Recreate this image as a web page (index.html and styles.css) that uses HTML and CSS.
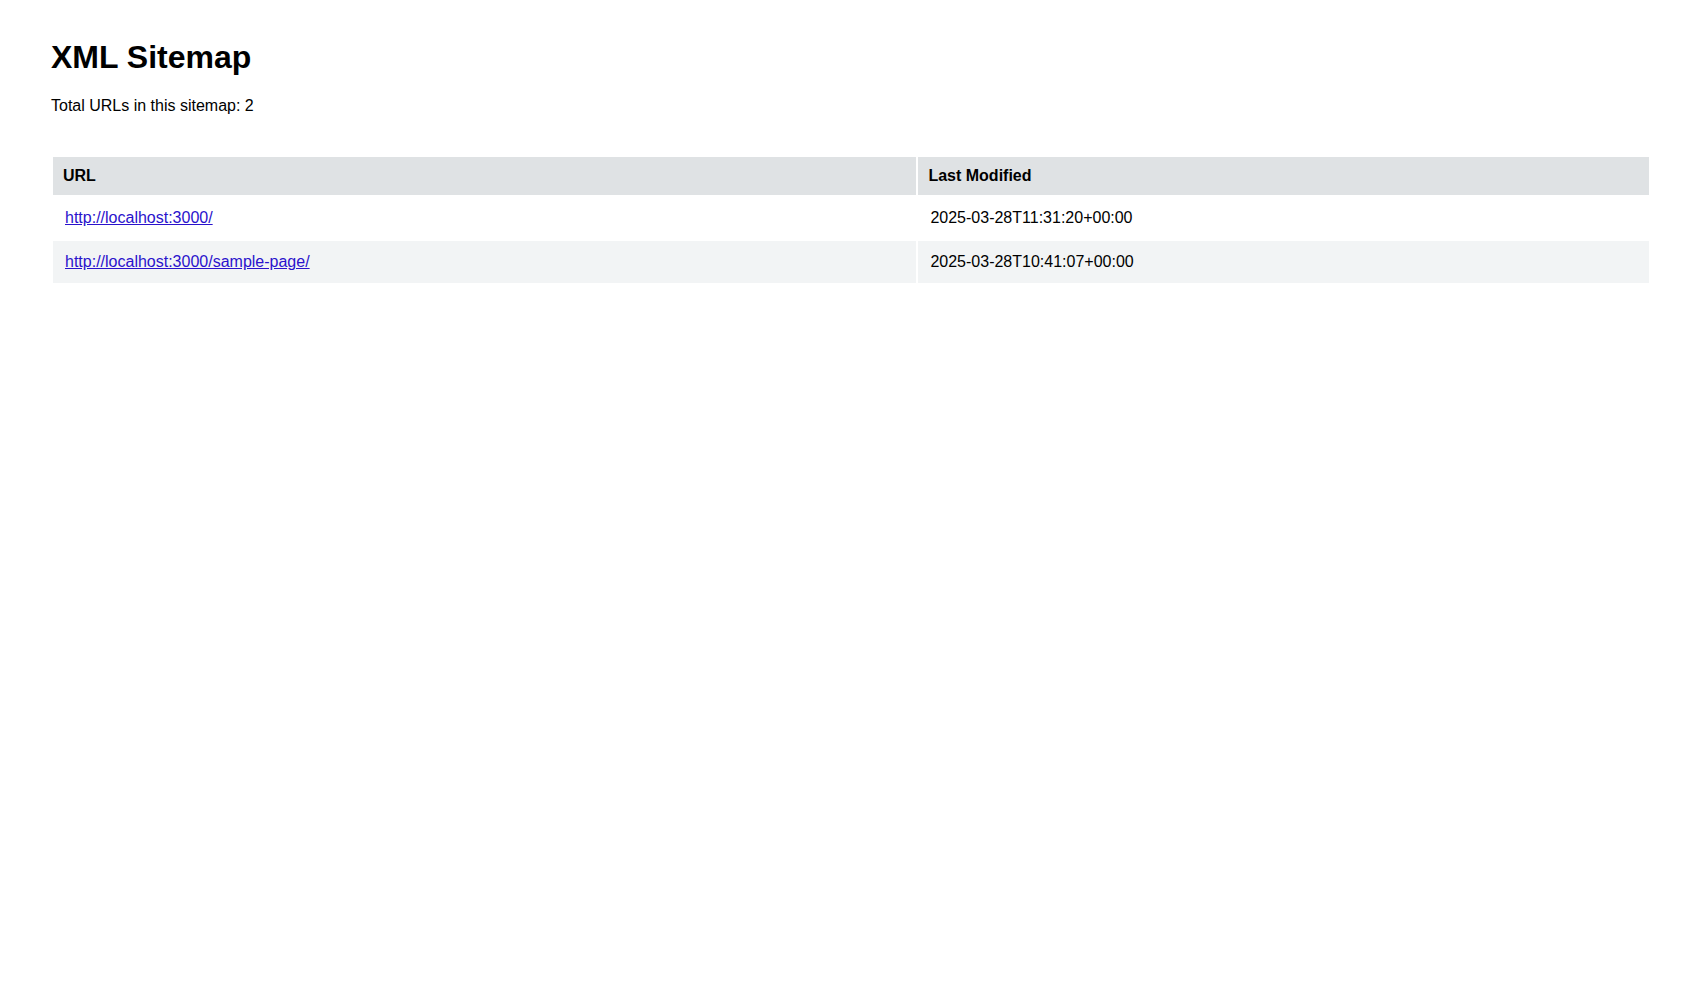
FILE: index.html
```html
<!DOCTYPE html>
<html lang="en">
<head>
  <meta charset="UTF-8">
  <title>XML Sitemap</title>
  <link rel="stylesheet" href="styles.css">
</head>
<body>

  <div class="page">
    <h1>XML Sitemap</h1>
    <p class="count">Total URLs in this sitemap: 2</p>

    <table class="sitemap">
      <thead>
        <tr>
          <th>URL</th>
          <th>Last Modified</th>
        </tr>
      </thead>
      <tbody>
        <tr>
          <td><a href="http://localhost:3000/">http://localhost:3000/</a></td>
          <td>2025-03-28T11:31:20+00:00</td>
        </tr>
        <tr>
          <td><a href="http://localhost:3000/sample-page/">http://localhost:3000/sample-page/</a></td>
          <td>2025-03-28T10:41:07+00:00</td>
        </tr>
      </tbody>
    </table>
  </div>

</body>
</html>
```

FILE: styles.css
```css
    body {
      font-family: "Liberation Sans", Arial, Helvetica, sans-serif;
      font-size: 16px;
      margin: 0;
      background: #fff;
      color: #000;
    }

    .page {
      padding: 39px 49px 39px 51px;
    }

    h1 {
      font-size: 32px;
      font-weight: bold;
      margin: 0 0 21px 0;
    }

    .count {
      margin: 0 0 40px 0;
    }

    .sitemap {
      width: 100%;
      border-spacing: 2px;
    }

    .sitemap th {
      background: #dfe2e4;
      text-align: left;
      font-weight: bold;
      padding: 10px 10px;
    }

    .sitemap td {
      padding: 12px 12px;
    }

    .sitemap tbody tr:nth-child(even) td {
      background: #f2f4f5;
    }

    .sitemap a {
      color: #2a12cc;
      text-decoration: underline;
    }
```
